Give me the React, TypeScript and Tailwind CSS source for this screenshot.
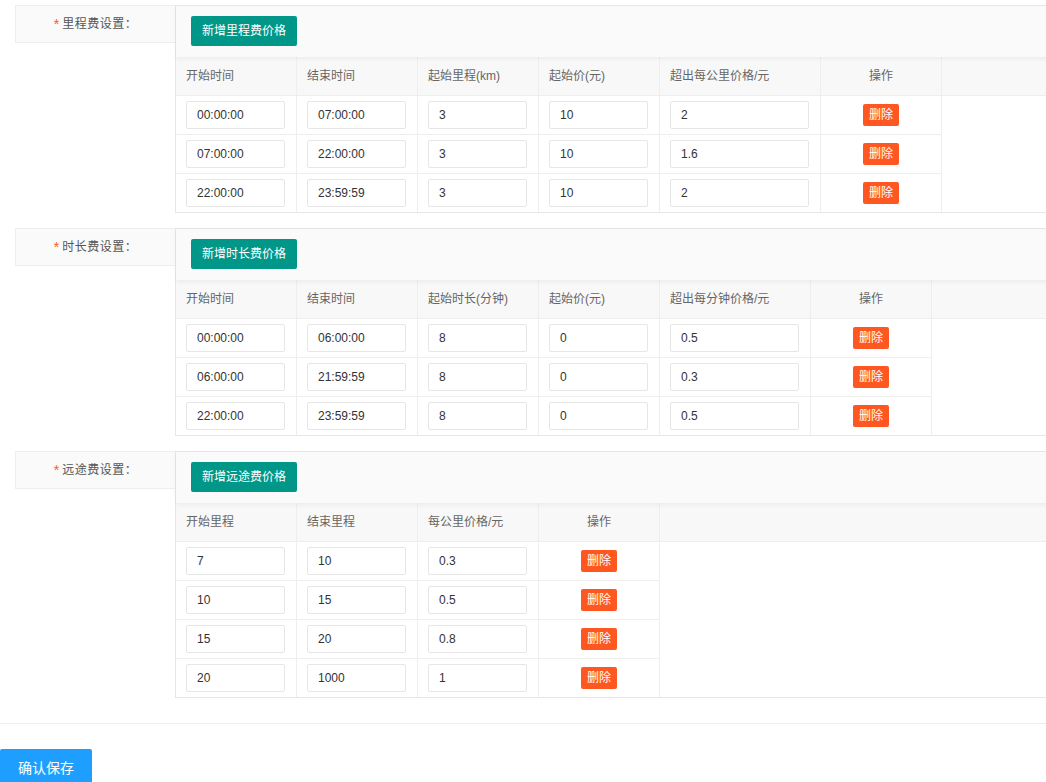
import React from "react";

type Section = {
  label: string;
  addText: string;
  cols: { title: string; w: string }[];
  rows: string[][];
};

const sections: Section[] = [
  {
    label: "里程费设置：",
    addText: "新增里程费价格",
    cols: [
      { title: "开始时间", w: "w-[121px]" },
      { title: "结束时间", w: "w-[121px]" },
      { title: "起始里程(km)", w: "w-[121px]" },
      { title: "起始价(元)", w: "w-[121px]" },
      { title: "超出每公里价格/元", w: "w-[161px]" },
    ],
    rows: [
      ["00:00:00", "07:00:00", "3", "10", "2"],
      ["07:00:00", "22:00:00", "3", "10", "1.6"],
      ["22:00:00", "23:59:59", "3", "10", "2"],
    ],
  },
  {
    label: "时长费设置：",
    addText: "新增时长费价格",
    cols: [
      { title: "开始时间", w: "w-[121px]" },
      { title: "结束时间", w: "w-[121px]" },
      { title: "起始时长(分钟)", w: "w-[121px]" },
      { title: "起始价(元)", w: "w-[121px]" },
      { title: "超出每分钟价格/元", w: "w-[151px]" },
    ],
    rows: [
      ["00:00:00", "06:00:00", "8", "0", "0.5"],
      ["06:00:00", "21:59:59", "8", "0", "0.3"],
      ["22:00:00", "23:59:59", "8", "0", "0.5"],
    ],
  },
  {
    label: "远途费设置：",
    addText: "新增远途费价格",
    cols: [
      { title: "开始里程", w: "w-[121px]" },
      { title: "结束里程", w: "w-[121px]" },
      { title: "每公里价格/元", w: "w-[121px]" },
    ],
    rows: [
      ["7", "10", "0.3"],
      ["10", "15", "0.5"],
      ["15", "20", "0.8"],
      ["20", "1000", "1"],
    ],
  },
];

const FeeTable = ({ s }: { s: Section }) => {
  return (
    <div className="flex items-start">
      <div className="w-[160px] h-[38px] shrink-0 bg-[#fafafa] border border-r-0 border-[#eee] flex items-center justify-center text-[12px] text-[#555]">
        <span className="text-[#FF5722] text-[14px] mr-[3px]">*</span>
        <span className="tracking-[0.5px]">{s.label}</span>
      </div>
      <div className="w-[920px] shrink-0 border-l border-t border-b border-[#e6e6e6]">
        <div className="relative z-10 h-[51px] bg-[#fafafa] pl-[15px] pt-[10px] shadow-[0_2px_4px_rgba(0,0,0,0.05)]">
          <button
            type="button"
            className="h-[30px] px-[11px] bg-[#009688] text-white text-[12px] rounded-[2px]"
          >
            {s.addText}
          </button>
        </div>
        <div className="flex h-[39px] bg-[#f8f8f8] border-b border-[#eee] text-[12px] text-[#666]">
          {s.cols.map((c) => (
            <div
              key={c.title}
              className={`${c.w} shrink-0 border-r border-[#eee] flex items-center px-[10px]`}
            >
              {c.title}
            </div>
          ))}
          <div className="w-[121px] shrink-0 border-r border-[#eee] flex items-center justify-center">
            操作
          </div>
          <div className="flex-1" />
        </div>
        {s.rows.map((r, i) => (
          <div key={i} className="flex">
            <div
              className={`flex ${
                i < s.rows.length - 1 ? "h-[39px] border-b" : "h-[38px]"
              } border-[#eee]`}
            >
              {r.map((v, j) => (
                <div
                  key={j}
                  className={`${s.cols[j].w} shrink-0 border-r border-[#eee] flex items-center pl-[10px] pr-[11px]`}
                >
                  <input
                    readOnly
                    value={v}
                    className="w-full h-[28px] border border-[#e6e6e6] rounded-[2px] pl-[10px] text-[12px] text-[#333] bg-white outline-none"
                  />
                </div>
              ))}
              <div className="w-[121px] shrink-0 border-r border-[#eee] flex items-center justify-center">
                <button
                  type="button"
                  className="h-[22px] px-[6px] bg-[#FF5722] text-white text-[12px] rounded-[2px]"
                >
                  删除
                </button>
              </div>
            </div>
          </div>
        ))}
      </div>
    </div>
  );
};

export default function App() {
  return (
    <div
      className="w-full min-h-screen bg-white overflow-hidden"
      style={{ fontFamily: '"Liberation Sans", "Noto Sans CJK SC", sans-serif' }}
    >
      <div className="pl-[15px] pt-[5px] flex flex-col gap-[15px]">
        {sections.map((s) => (
          <FeeTable key={s.label} s={s} />
        ))}
      </div>
      <div className="mt-[25px] border-t border-[#eee]" />
      <div className="pt-[25px]">
        <button
          type="button"
          className="h-[38px] w-[92px] bg-[#1E9FFF] text-white text-[14px] rounded-[2px]"
        >
          确认保存
        </button>
      </div>
    </div>
  );
}
